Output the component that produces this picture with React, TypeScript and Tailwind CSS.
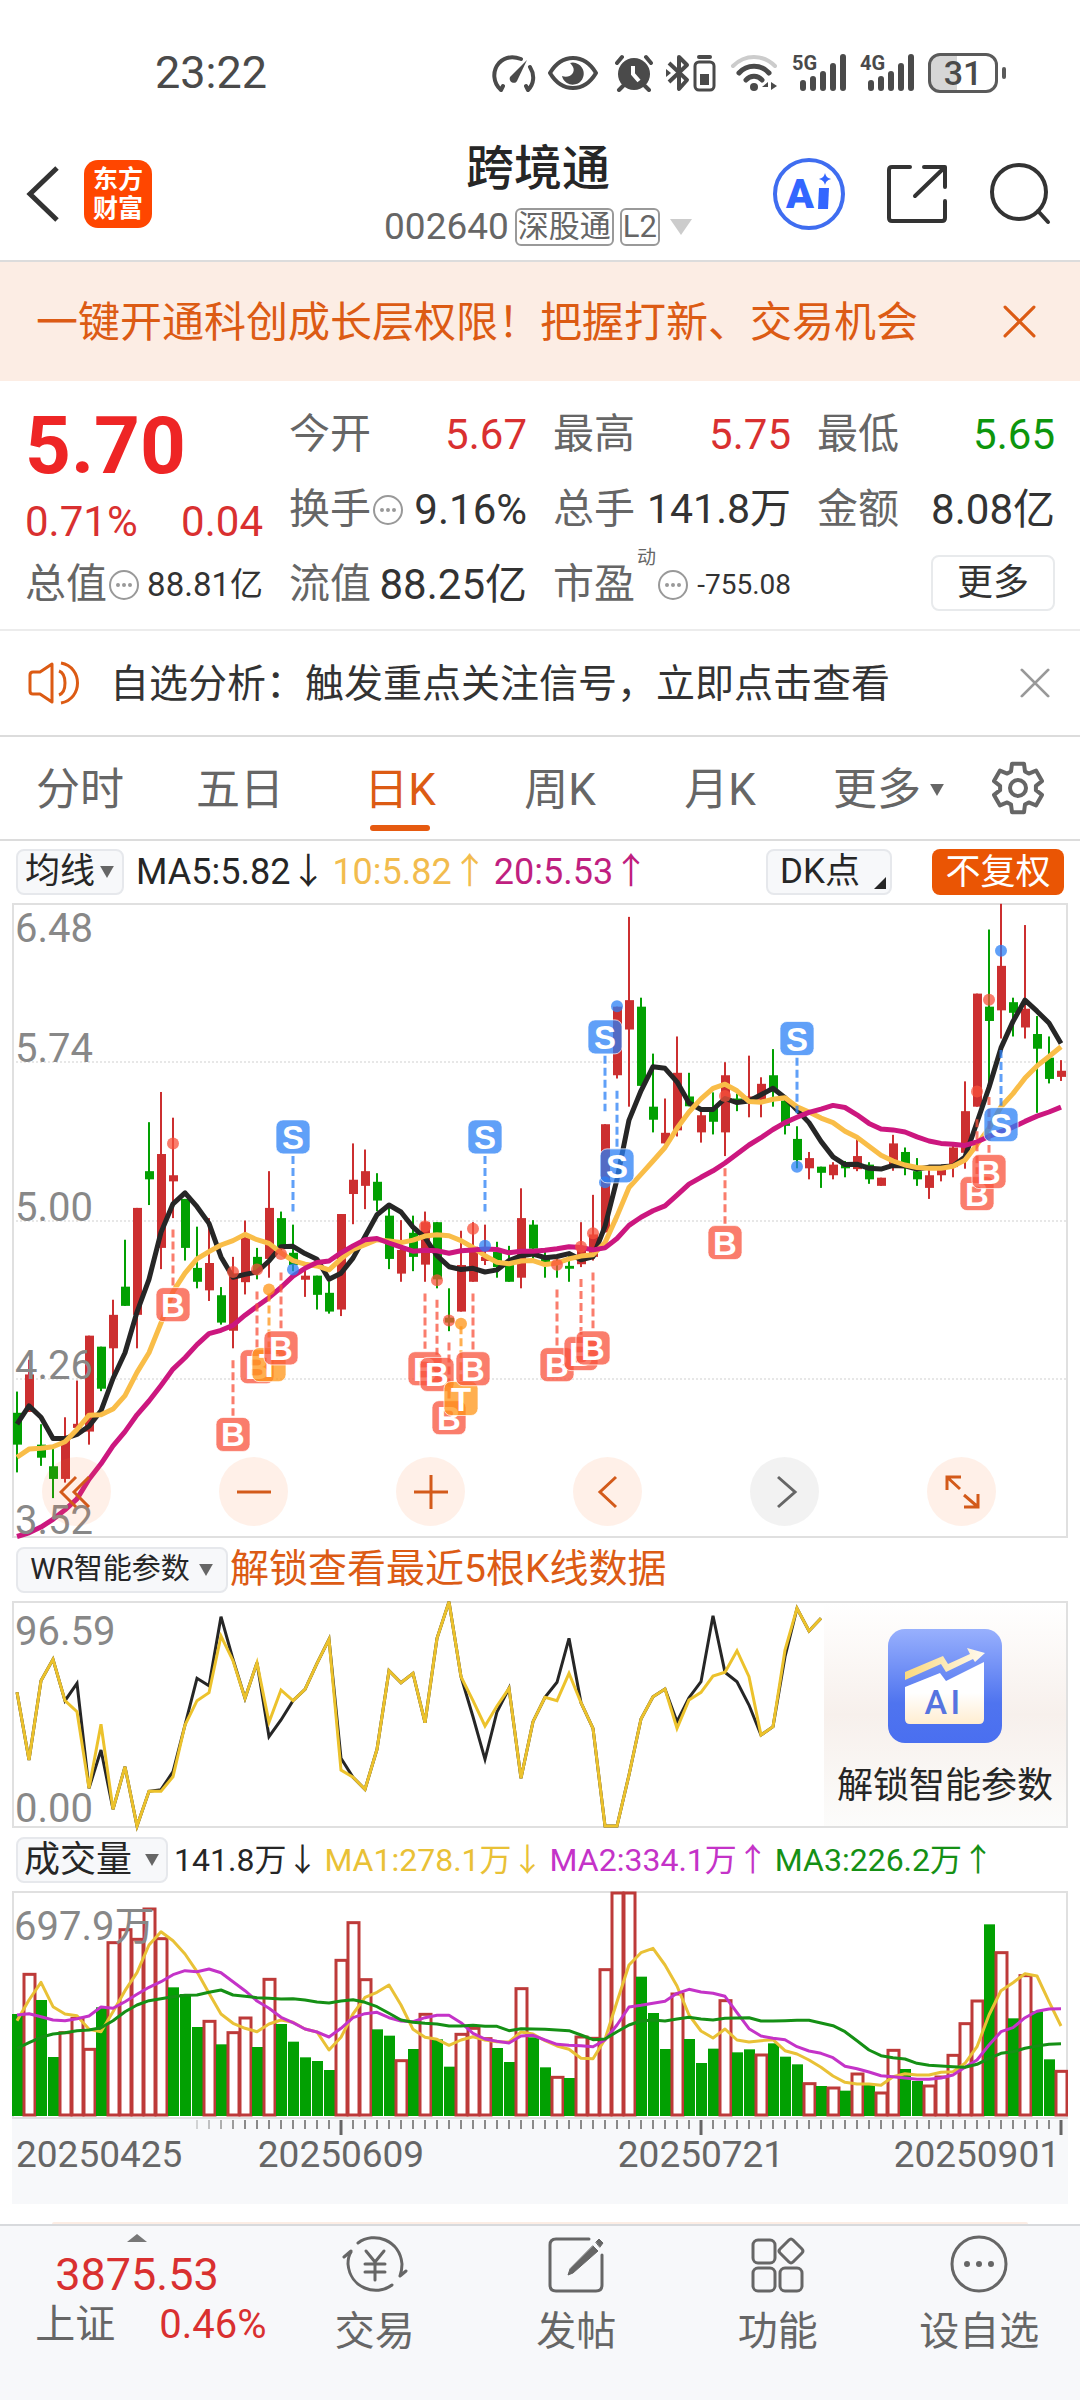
import type { ReactNode } from "react";

type Candle = [tone: "r" | "g", top: number, bottom: number, high: number, low: number];
type Marker = [index: number, kind: "B" | "S" | "T", label: number, dot: number, from: number, to: number];

const RED = "#cc2f30";
const GREEN = "#02a002";

const candles: Candle[] = [
  ["g", 1257, 1335, 1205, 1403], ["r", 1163, 1255, 1127, 1255], ["g", 1335, 1367, 1285, 1387], ["g", 1388, 1419, 1345, 1466],
  ["r", 1320, 1419, 1268, 1428], ["r", 1284, 1294, 1178, 1294], ["r", 1068, 1303, 1068, 1335], ["g", 1095, 1198, 1095, 1204],
  ["r", 1017, 1099, 980, 1170], ["g", 948, 995, 833, 995], ["r", 755, 1017, 755, 1099], ["g", 665, 685, 545, 748],
  ["r", 623, 853, 471, 905], ["r", 675, 690, 534, 780], ["g", 733, 853, 733, 884], ["g", 902, 936, 801, 952],
  ["r", 890, 957, 780, 983], ["g", 969, 1036, 949, 1041], ["r", 915, 1056, 875, 1099], ["r", 828, 937, 786, 967],
  ["g", 875, 910, 853, 930], ["r", 755, 880, 665, 926], ["g", 780, 850, 764, 865], ["g", 865, 895, 796, 910],
  ["r", 921, 931, 905, 973], ["g", 921, 968, 921, 1004], ["g", 963, 1009, 935, 1014], ["r", 770, 1004, 770, 1020],
  ["r", 686, 721, 597, 795], ["r", 665, 701, 612, 758], ["g", 691, 737, 670, 763], ["g", 774, 880, 750, 905],
  ["r", 858, 916, 785, 936], ["g", 816, 875, 774, 910], ["r", 790, 894, 764, 936], ["g", 790, 930, 790, 952],
  ["g", 1024, 1036, 952, 1057], ["r", 895, 1009, 811, 1009], ["r", 850, 936, 790, 936], ["r", 875, 885, 796, 895],
  ["g", 863, 900, 838, 926], ["g", 885, 936, 848, 936], ["r", 780, 926, 707, 952], ["g", 796, 855, 785, 880],
  ["g", 875, 890, 860, 926], ["g", 885, 893, 870, 926], ["g", 897, 904, 870, 936], ["r", 850, 893, 790, 900],
  ["r", 820, 875, 723, 884], ["r", 550, 815, 550, 815], ["r", 262, 430, 262, 438], ["r", 246, 318, 42, 507],
  ["g", 262, 456, 240, 456], ["g", 507, 539, 377, 570], ["r", 571, 597, 487, 597], ["r", 424, 565, 335, 580],
  ["g", 482, 506, 424, 506], ["r", 528, 570, 518, 595], ["g", 510, 544, 472, 575], ["r", 430, 570, 398, 628],
  ["g", 487, 497, 475, 518], ["r", 482, 492, 382, 533], ["r", 451, 490, 435, 533], ["g", 430, 470, 366, 507],
  ["g", 492, 554, 485, 575], ["g", 586, 638, 555, 658], ["r", 633, 658, 618, 685], ["g", 654, 669, 654, 706],
  ["r", 649, 675, 643, 685], ["g", 648, 658, 640, 680], ["r", 628, 660, 586, 665], ["g", 649, 685, 643, 696],
  ["r", 681, 701, 681, 701], ["r", 597, 648, 576, 664], ["g", 618, 648, 607, 675], ["g", 665, 685, 633, 701],
  ["r", 675, 706, 660, 733], ["r", 660, 675, 655, 690], ["r", 607, 655, 600, 680], ["r", 518, 620, 445, 659],
  ["r", 230, 507, 230, 507], ["g", 262, 297, 73, 470], ["r", 162, 271, 10, 340], ["g", 251, 277, 240, 335],
  ["r", 267, 313, 62, 340], ["g", 329, 365, 285, 522], ["g", 387, 439, 335, 450], ["r", 419, 434, 393, 444],
];

const ma5 = [
  1285, 1240, 1268, 1320, 1320, 1310, 1290, 1252, 1173, 1110, 1010, 930, 815, 745, 718, 752, 793, 875, 925, 918, 912, 885,
  850, 849, 867, 881, 930, 915, 878, 825, 772, 748, 765, 802, 828, 872, 899, 906, 903, 912, 907, 884, 872, 868, 877, 874,
  867, 882, 875, 800, 685, 540, 468, 409, 413, 446, 498, 514, 514, 487, 497, 493, 478, 462, 485, 515, 546, 592, 630, 649,
  648, 658, 660, 651, 652, 660, 655, 654, 652, 630, 545, 460, 363, 298, 246, 273, 302, 352,
];
const ma10 = [
  1366, 1346, 1344, 1340, 1328, 1298, 1263, 1262, 1248, 1215, 1158, 1110, 1037, 960, 915, 880, 862, 846, 835, 820, 833, 842,
  865, 884, 893, 897, 907, 880, 857, 845, 833, 836, 840, 834, 824, 821, 823, 835, 852, 872, 888, 892, 885, 884, 894, 890,
  880, 873, 870, 840, 775, 705, 673, 640, 607, 560, 520, 488, 462, 452, 468, 494, 496, 489, 485, 507, 520, 535, 546, 567,
  582, 604, 626, 640, 650, 656, 658, 658, 653, 638, 600, 560, 507, 475, 437, 407, 384, 360,
];
const ma20 = [
  1560, 1551, 1537, 1518, 1495, 1468, 1420, 1382, 1338, 1303, 1262, 1228, 1190, 1150, 1122, 1090, 1063, 1055, 1043, 1018,
  996, 975, 950, 922, 903, 889, 885, 865, 848, 833, 830, 841, 851, 861, 859, 860, 866, 860, 858, 856, 857, 865, 861, 861,
  859, 855, 850, 852, 858, 853, 830, 798, 778, 762, 750, 724, 697, 680, 664, 645, 623, 601, 583, 563, 546, 533, 521, 513,
  504, 509, 527, 548, 562, 564, 569, 581, 591, 597, 599, 602, 593, 580, 568, 557, 543, 530, 520, 508,
];

const markers: Marker[] = [
  [13, "B", 992, 597, 808, 945], [18, "B", 1310, 912, 1128, 1264], [20, "B", 1144, 906, 960, 1100],
  [21, "T", 1139, 955, 965, 1098], [22, "B", 1098, 868, 913, 1050], [23, "S", 581, 906, 628, 764],
  [34, "B", 1149, 800, 965, 1100], [35, "B", 1163, 932, 980, 1115], [36, "B", 1269, 1031, 1085, 1225],
  [37, "T", 1222, 1039, 1045, 1180], [38, "B", 1149, 806, 965, 1102], [39, "S", 581, 848, 628, 764],
  [45, "B", 1139, 894, 955, 1093], [47, "B", 1112, 850, 929, 1066], [48, "B", 1098, 817, 913, 1050],
  [49, "S", 336, 692, 382, 518], [50, "S", 652, 261, 468, 605], [59, "B", 840, 481, 658, 794],
  [65, "S", 340, 654, 387, 523], [80, "B", 720, 470, 538, 672], [81, "B", 666, 245, 483, 620],
  [82, "S", 551, 125, 368, 505],
];

const wrSlow = [
  487, 690, 452, 388, 512, 545, 775, 583, 838, 710, 888, 784, 784, 740, 585, 512, 488, 318, 392, 505, 398, 577, 480, 512,
  478, 400, 328, 720, 742, 778, 658, 422, 458, 430, 578, 325, 215, 440, 512, 588, 528, 475, 745, 575, 502, 512, 430, 518,
  595, 888, 888, 735, 567, 500, 477, 595, 510, 487, 438, 427, 362, 440, 615, 590, 360, 235, 303, 265,
];
const wrFastChanges: Record<number, number> = {
  5: 460, 7: 660, 12: 779, 13: 725, 15: 445, 16: 467, 17: 260, 18: 388, 21: 620, 22: 570, 27: 685, 38: 560, 39: 688,
  40: 545, 45: 457, 46: 325, 55: 575, 56: 503, 57: 455, 58: 257, 60: 455, 61: 525, 64: 380,
};
const wrFast = wrSlow.map((v, i) => wrFastChanges[i] ?? v);

const volumes = [
  552, 430, 510, 681, 605, 562, 655, 532, 335, 296, 325, 234, 323, 472, 492, 591, 571, 643, 605, 561, 651, 445, 582, 635,
  682, 693, 720, 388, 275, 446, 598, 617, 689, 657, 550, 628, 710, 610, 592, 623, 654, 696, 473, 622, 712, 739, 744, 618,
  622, 416, 186, 186, 440, 549, 657, 489, 627, 699, 656, 509, 667, 658, 672, 640, 680, 703, 758, 768, 771, 782, 729, 765,
  786, 658, 717, 753, 765, 738, 673, 578, 510, 283, 365, 565, 434, 544, 688, 721,
];
const volumeTones =
  "grggrrrgrrrrrgggrgrrgrgggggrrrggrgrggrrrggrggrgrrrrrgggrgggrggrgggrgrgrgrrggrrrrrgrgrggr";
const volMa1 = [
  572, 510, 457, 530, 552, 557, 598, 605, 545, 482, 428, 345, 305, 332, 372, 425, 490, 552, 580, 595, 605, 582, 570, 577,
  597, 606, 660, 622, 552, 502, 487, 465, 525, 598, 622, 628, 646, 630, 620, 630, 635, 636, 606, 612, 632, 648, 658, 685,
  686, 628, 515, 405, 368, 355, 405, 468, 555, 603, 624, 597, 630, 636, 632, 629, 662, 672, 690, 712, 738, 757, 762, 762,
  766, 740, 731, 735, 735, 727, 725, 700, 650, 555, 482, 458, 431, 438, 515, 588,
];
const volMa2 = [
  555, 551, 560, 570, 572, 566, 558, 531, 535, 515, 493, 472, 455, 434, 422, 425, 417, 428, 455, 482, 513, 535, 562, 578,
  597, 606, 621, 595, 563, 551, 547, 563, 573, 575, 563, 556, 556, 578, 610, 627, 634, 639, 618, 616, 630, 643, 646, 647,
  650, 630, 585, 531, 526, 520, 514, 490, 478, 486, 490, 499, 548, 596, 618, 625, 629, 650, 663, 670, 683, 709, 716, 726,
  737, 740, 744, 748, 748, 744, 735, 712, 690, 645, 605, 593, 563, 544, 537, 536,
];
const volMa3 = [
  655, 638, 622, 612, 608, 602, 600, 593, 572, 545, 525, 512, 506, 500, 496, 495, 487, 480, 495, 499, 503, 505, 507, 506,
  510, 516, 519, 513, 509, 517, 530, 550, 570, 577, 580, 582, 588, 588, 586, 589, 589, 602, 596, 597, 598, 600, 602, 615,
  629, 627, 605, 585, 573, 570, 573, 567, 562, 567, 570, 565, 564, 563, 573, 573, 572, 571, 571, 579, 587, 605, 632, 660,
  677, 683, 687, 700, 706, 708, 710, 712, 703, 685, 670, 665, 655, 648, 643, 641,
];

const colX = (i: number) => 5 + i * 12;
const priceY = (v: number) => (v - 8) / 2.45;
const wrY = (v: number) => (v - 213) / 3;
const volY = (v: number) => (v - 183) / 3;
const line = (values: number[], y: (v: number) => number) =>
  values.map((v, i) => `${colX(i)},${y(v).toFixed(1)}`).join(" ");

const markerColor = { B: "#f8523b", S: "#2b80f5", T: "#ff9416" };

function Frame({ height }: { height: number }) {
  return <rect x="1" y="1" width="1054" height={height - 2} fill="none" stroke="#e0e0e0" strokeWidth="2" />;
}

function AxisText({ x, y, children }: { x: number; y: number; children: string }) {
  return (
    <text x={x} y={y} fontSize="40" fill="#888888">
      {children}
    </text>
  );
}

function PriceChart() {
  return (
    <svg viewBox="0 0 1056 635" className="block h-auto w-full overflow-visible" role="img" aria-label="日K线图">
      {[159, 318, 476].map((y) => (
        <line key={y} x1="0" x2="1056" y1={y} y2={y} stroke="#cfcfcf" strokeDasharray="2 2" />
      ))}
      <Frame height={635} />
      {candles.map(([tone, top, bottom, high, low], i) => {
        const fill = tone === "r" ? RED : GREEN;
        return (
          <g key={i} fill={fill}>
            <rect x={colX(i) - 1} y={priceY(high)} width="2" height={priceY(low) - priceY(high)} />
            <rect x={colX(i) - 4} y={priceY(top)} width="9" height={priceY(bottom) - priceY(top)} />
          </g>
        );
      })}
      <g fill="none" strokeWidth="5" strokeLinejoin="round">
        <polyline points={line(ma5, priceY)} stroke="#262626" />
        <polyline points={line(ma10, priceY)} stroke="#f9bd48" />
        <polyline points={line(ma20, priceY)} stroke="#cc177f" />
      </g>
      <AxisText x={3} y={39}>6.48</AxisText>
      <AxisText x={3} y={159}>5.74</AxisText>
      <AxisText x={3} y={318}>5.00</AxisText>
      <AxisText x={3} y={476}>4.26</AxisText>
      <AxisText x={3} y={631}>3.52</AxisText>
      {markers.map(([i, kind, label, dot, from, to]) => (
        <g key={i} fill={markerColor[kind]}>
          <line
            x1={colX(i)} x2={colX(i)} y1={priceY(from)} y2={priceY(to)}
            stroke={markerColor[kind]} strokeOpacity="0.75" strokeWidth="3" strokeDasharray="8 4"
          />
          <circle cx={colX(i)} cy={priceY(dot)} r="6" fillOpacity="0.75" />
          <rect
            x={colX(i) - 17} y={priceY(label) - 17} width="34" height="34" rx="7"
            fillOpacity="0.75" stroke="#ffffff" strokeOpacity="0.7"
          />
          <text
            x={colX(i)} y={priceY(label) + 12} textAnchor="middle" fontSize="33" fontWeight="700"
            fill="#ffffff" className="font-['Liberation_Sans']"
          >
            {kind}
          </text>
        </g>
      ))}
    </svg>
  );
}

function WrChart() {
  return (
    <svg viewBox="0 0 1056 227" className="block h-auto w-full overflow-visible" role="img" aria-label="WR指标图">
      <Frame height={227} />
      <AxisText x={3} y={44}>96.59</AxisText>
      <AxisText x={3} y={221}>0.00</AxisText>
      <g fill="none" strokeWidth="3" strokeLinejoin="miter">
        <polyline points={line(wrFast, wrY)} stroke="#262626" />
        <polyline points={line(wrSlow, wrY)} stroke="#ecc22c" />
      </g>
    </svg>
  );
}

function VolumeChart() {
  return (
    <svg viewBox="0 0 1056 228" className="block h-auto w-full" role="img" aria-label="成交量图">
      <Frame height={228} />
      {volumes.map((v, i) =>
        volumeTones[i] === "g" ? (
          <rect key={i} x={colX(i) - 5} y={volY(v)} width="11" height={225 - volY(v)} fill={GREEN} />
        ) : (
          <rect
            key={i} x={colX(i) - 5} y={volY(v) + 1} width="11" height={223 - volY(v)}
            fill="#ffffff" stroke="#bd3a39" strokeWidth="3"
          />
        ),
      )}
      <AxisText x={2} y={49}>697.9万</AxisText>
      <g fill="none" strokeWidth="3" strokeLinejoin="round">
        <polyline points={line(volMa1, volY)} stroke="#e9c136" />
        <polyline points={line(volMa2, volY)} stroke="#c433c8" />
        <polyline points={line(volMa3, volY)} stroke="#159015" />
      </g>
    </svg>
  );
}

function DateAxis() {
  return (
    <svg viewBox="0 0 1056 85" className="block h-auto w-full bg-[#f7f8fa]" role="img" aria-label="日期">
      {Array.from({ length: 73 }, (_, k) => k + 15).map((i) => {
        const major = i === 27 || i === 57 || i === 87;
        return (
          <line
            key={i} x1={colX(i)} x2={colX(i)} y1="1" y2={major ? 16 : 10} stroke={major ? "#666666" : "#8a8a8a"}
            strokeWidth={major ? 3 : 2} strokeOpacity={Math.min(1, (i - 13) / 6)}
          />
        );
      })}
      <g fontSize="37" fill="#666666">
        <text x="4" y="48">20250425</text>
        <text x="329" y="48" textAnchor="middle">20250609</text>
        <text x="689" y="48" textAnchor="middle">20250721</text>
        <text x="1048" y="48" textAnchor="end">20250901</text>
      </g>
    </svg>
  );
}

function StatusIcons() {
  return (
    <div className="flex items-center text-[#4a4a4a]" aria-hidden="true">
      <svg width="44" height="40" viewBox="0 0 44 40" fill="none" stroke="currentColor" strokeWidth="4" strokeLinecap="round" strokeLinejoin="round">
        <path d="M11 33l-2 4C1 30 0 18 7 10 13 4 21 3 29 6M38 14c5 8 4 17-2 23l-2-4" />
        <path d="M35 7 25 28c-2 4-9 1-7-4z" fill="currentColor" stroke="none" />
      </svg>
      <svg width="50" height="36" viewBox="0 0 50 36" className="ml-3" fill="none" stroke="currentColor" strokeWidth="4">
        <path d="M2 18C8 8 16 3 25 3s17 5 23 15c-6 10-14 15-23 15S8 28 2 18z" strokeLinejoin="round" />
        <path d="M22 8a11 11 0 1 1-8 13c7 3 14-3 11-9-1-2-2-3-3-4z" fill="currentColor" stroke="none" />
      </svg>
      <svg width="40" height="38" viewBox="0 0 40 38" className="ml-4">
        <circle cx="20" cy="20" r="16" fill="currentColor" />
        <path d="M3 9 8 3M37 9l-5-6M9 32l-4 4M31 32l4 4" stroke="currentColor" strokeWidth="4" strokeLinecap="round" />
        <path d="M19 12v8l6 7" stroke="#ffffff" strokeWidth="4" fill="none" />
      </svg>
      <svg width="52" height="38" viewBox="0 0 52 38" className="ml-3" fill="none" stroke="currentColor" strokeWidth="4">
        <path d="M3 9 21 26l-8 9V3l8 8L3 28" strokeLinejoin="round" />
        <path d="M0 15l5 4-5 4z" fill="currentColor" stroke="none" />
        <rect x="29" y="8" width="19" height="28" rx="4" strokeWidth="3" />
        <path d="M33 3h11" strokeLinecap="round" />
        <path d="M34 20h9v11h-9z" fill="currentColor" stroke="none" />
      </svg>
      <svg width="50" height="38" viewBox="0 0 50 38" className="ml-3" fill="none" strokeWidth="5" strokeLinecap="round">
        <path d="M3 12C15 0 33 0 45 12" stroke="#cccccc" strokeWidth="4" />
        <path d="M9 19c8-9 22-9 30 0M16 26c4-5 12-5 16 0" stroke="currentColor" />
        <circle cx="24" cy="33" r="4" fill="currentColor" />
        <path d="m38 28-6 5h6zM41 28v8l6-4z" fill="currentColor" />
      </svg>
      {["5G", "4G"].map((label) => (
        <div key={label} className="relative ml-3 h-10 w-14">
          <span className="absolute top-0 left-0 text-[20px] leading-5 font-bold">{label}</span>
          <svg viewBox="0 0 56 40" className="h-10 w-14" stroke="currentColor" strokeWidth="6" strokeLinecap="round">
            <path d="M11 35v-5M21 35v-9M31 35V21M41 35V13M51 35V4" />
          </svg>
        </div>
      ))}
      <div className="ml-3 flex h-10 w-[70px] items-center justify-center rounded-xl border-3 border-[#5a5a5a] bg-linear-to-r from-[#d6d6d6] from-40% to-white to-40% text-[34px] leading-none font-medium">
        31
      </div>
      <div className="ml-1 h-3 w-1 rounded-full bg-[#5a5a5a]" />
    </div>
  );
}

function CloseIcon({ size, className }: { size: number; className?: string }) {
  return (
    <svg width={size} height={size} viewBox="0 0 32 32" className={className} stroke="currentColor" strokeWidth="3" strokeLinecap="round">
      <path d="M2 2l28 28M30 2 2 30" />
    </svg>
  );
}

function InfoDots() {
  return (
    <svg width="30" height="30" viewBox="0 0 30 30" fill="none" stroke="#999999" strokeWidth="2" className="shrink-0">
      <circle cx="15" cy="15" r="14" />
      <path d="M9 15h0M15 15h0M21 15h0" strokeWidth="4" strokeLinecap="round" />
    </svg>
  );
}

function Caret({ className }: { className?: string }) {
  return (
    <svg viewBox="0 0 16 14" className={className} fill="#666666" aria-hidden="true">
      <path d="M0 0h16L8 14z" />
    </svg>
  );
}

function Stat({ label, value, tone = "text-[#333333]", extra, size = "text-[42px]" }: {
  label: string;
  value: string;
  tone?: string;
  extra?: ReactNode;
  size?: string;
}) {
  return (
    <div className="flex h-[75px] items-center justify-between whitespace-nowrap">
      <dt className="flex items-center gap-0.5 text-[41px] text-[#666666]">
        {label}
        {extra}
      </dt>
      <dd className={`${size} ${tone}`}>{value}</dd>
    </div>
  );
}

const gearPath = Array.from({ length: 6 }, (_, k) => k * 60 - 90)
  .flatMap((a) => [[a - 23, 18], [a - 14, 25], [a + 14, 25], [a + 23, 18]])
  .map(([a, r], i) => {
    const t = (a * Math.PI) / 180;
    return `${i ? "L" : "M"}${(28 + r * Math.cos(t)).toFixed(1)} ${(28 + r * Math.sin(t)).toFixed(1)}`;
  })
  .join("") + "Z";

function ChartButton({ label, muted, children }: { label: string; muted?: boolean; children: ReactNode }) {
  return (
    <button
      aria-label={label}
      className={`flex size-[69px] items-center justify-center rounded-full ${muted ? "bg-[#8888881c] text-[#666666]" : "bg-[#ff7a301c] text-[#d35a1a]"}`}
    >
      <svg width="36" height="36" viewBox="0 0 36 36" fill="none" stroke="currentColor" strokeWidth="3">
        {children}
      </svg>
    </button>
  );
}

function NavButton({ label, children }: { label: string; children: ReactNode }) {
  return (
    <button className="flex flex-1 flex-col items-center pt-2 text-[#666666]">
      <svg width="66" height="60" viewBox="0 0 66 60" fill="none" stroke="currentColor" strokeWidth="3" strokeLinecap="round" strokeLinejoin="round">
        {children}
      </svg>
      <span className="mt-2 text-[40px] leading-[60px]">{label}</span>
    </button>
  );
}

const chip = "flex h-[46px] items-center rounded-lg border-2 border-[#e6e8ec] bg-[#f7f8fa] text-[#262626]";

export default function App() {
  return (
    <div className="flex min-h-screen w-full flex-col overflow-hidden bg-white font-['Roboto','Noto_Sans_CJK_SC',sans-serif] text-[#262626]">
      <div className="flex h-[120px] items-end justify-between pr-[74px] pb-[27px] pl-[155px]">
        <time className="text-[45px] leading-10 text-[#4a4a4a]">23:22</time>
        <StatusIcons />
      </div>

      <header className="grid h-[142px] grid-cols-[1fr_auto_1fr] items-center border-b-2 border-[#dcdcdc] pr-7 pl-6">
        <div className="flex items-center gap-6 pt-2">
          <button aria-label="返回">
            <svg width="36" height="58" viewBox="0 0 36 58" fill="none" stroke="#333333" strokeWidth="5">
              <path d="M33 3 6 29l27 26" />
            </svg>
          </button>
          <div className="flex size-[68px] flex-col items-center justify-center rounded-[14px] bg-[#ff4600] text-[25px] leading-[29px] font-bold text-white">
            <span>东方</span>
            <span>财富</span>
          </div>
        </div>
        <button className="flex flex-col items-center pt-3">
          <span className="text-[48px] leading-[62px] font-medium">跨境通</span>
          <span className="flex items-center gap-1.5 text-[37px] leading-[54px] text-[#666666]">
            002640
            <span className="flex h-[38px] items-center rounded-md border-2 border-[#999999] px-px text-[31px]">深股通</span>
            <span className="flex h-[38px] items-center rounded-md border-2 border-[#999999] px-px text-[31px]">L2</span>
            <svg width="22" height="16" viewBox="0 0 22 16" fill="#cccccc" className="ml-1">
              <path d="M0 0h22L11 16z" />
            </svg>
          </span>
        </button>
        <div className="flex items-center justify-end gap-10 pt-2">
          <button aria-label="Ai">
            <svg width="74" height="74" viewBox="0 0 74 74">
              <circle cx="37" cy="37" r="34" fill="#ffffff" stroke="#3f6df0" strokeWidth="4" />
              <text x="14" y="51" fontSize="41" fontWeight="900" fill="#3366ff">A</text>
              <path d="M47 31h10l-1 21h-10z" fill="#3366ff" />
              <path d="M53 16c1 4 3 5 6 6-3 1-5 2-6 6-1-4-3-5-6-6 3-1 5-2 6-6z" fill="#3366ff" />
            </svg>
          </button>
          <button aria-label="分享">
            <svg width="62" height="62" viewBox="0 0 62 62" fill="none" stroke="#333333" strokeWidth="4" strokeLinecap="round" strokeLinejoin="round">
              <path d="M24 4H6q-3 0-3 3v48q0 3 3 3h50q3 0 3-3V38" />
              <path d="M38 4h21v20M58 5 29 33" />
            </svg>
          </button>
          <button aria-label="搜索">
            <svg width="64" height="64" viewBox="0 0 64 64" fill="none" stroke="#333333" strokeWidth="4" strokeLinecap="round">
              <circle cx="31" cy="30" r="27" />
              <path d="M50 49l10 11" />
            </svg>
          </button>
        </div>
      </header>

      <section className="flex h-[119px] items-center justify-between bg-[#fcede4] pr-[44px] pl-9 text-[#dc5b14]">
        <a href="#open" className="pt-0.5 text-[42px]">一键开通科创成长层权限！把握打新、交易机会</a>
        <button aria-label="关闭"><CloseIcon size={33} /></button>
      </section>

      <section className="grid h-[250px] grid-cols-4 gap-x-[26px] border-b-2 border-[#ececec] px-[25px] pt-4">
        <div>
          <div className="flex h-[98px] items-center text-[80px] leading-none font-bold text-[#ee2525]">5.70</div>
          <div className="flex h-[52px] items-center justify-between text-[42px] text-[#d93030]">
            <span>0.71%</span>
            <span>0.04</span>
          </div>
          <Stat label="总值" extra={<InfoDots />} value="88.81亿" size="text-[33px]" />
        </div>
        <dl>
          <Stat label="今开" value="5.67" tone="text-[#d93030]" />
          <Stat label="换手" extra={<InfoDots />} value="9.16%" />
          <Stat label="流值" value="88.25亿" />
        </dl>
        <dl>
          <Stat label="最高" value="5.75" tone="text-[#d93030]" />
          <Stat label="总手" value="141.8万" size="text-[41px]" />
          <Stat
            label="市盈"
            extra={<><sup className="mt-1 self-start text-[19px] leading-5">动</sup><InfoDots /></>}
            value="-755.08"
            size="text-[28px]"
          />
        </dl>
        <div>
          <Stat label="最低" value="5.65" tone="text-[#0d960d]" />
          <Stat label="金额" value="8.08亿" />
          <div className="flex h-[72px] items-center justify-end">
            <button className="h-14 w-[124px] rounded-lg border-2 border-[#e8eaec] text-[36px] leading-none text-[#333333]">更多</button>
          </div>
        </div>
      </section>

      <section className="flex h-[106px] items-center border-b-2 border-[#dcdcdc] pr-[30px] pl-7">
        <svg width="54" height="44" viewBox="0 0 54 44" fill="none" stroke="#dc5b14" strokeWidth="3" strokeLinejoin="round">
          <path d="M24 3v38L12 33H5q-3 0-3-3V14q0-3 3-3h7zM31 10c8 3 8 21 0 24M33 2c22 4 22 36 0 40" />
        </svg>
        <a href="#analysis" className="ml-7 flex-1 pt-0.5 text-[39px] text-[#333333]">自选分析：触发重点关注信号，立即点击查看</a>
        <button aria-label="关闭" className="text-[#999999]"><CloseIcon size={30} /></button>
      </section>

      <nav className="flex h-[104px] items-center border-b-2 border-[#dcdcdc] text-[44px] text-[#666666]">
        {["分时", "五日", "日K", "周K", "月K"].map((tab) => (
          <button
            key={tab}
            aria-current={tab === "日K" ? "page" : undefined}
            className={`relative h-full w-40 pt-1 ${tab === "日K" ? "text-[#dc5b14]" : ""}`}
          >
            {tab}
            {tab === "日K" && <span className="absolute bottom-2 left-1/2 h-1.5 w-15 -translate-x-1/2 rounded-full bg-[#e65a10]" />}
          </button>
        ))}
        <button className="flex h-full flex-1 items-center justify-center gap-2 pt-1 pr-3">
          更多
          <Caret className="h-3 w-4" />
        </button>
        <button aria-label="设置" className="mr-[34px]">
          <svg width="56" height="56" viewBox="0 0 56 56" fill="none" stroke="#666666" strokeWidth="4" strokeLinejoin="round">
            <path d={gearPath} />
            <circle cx="28" cy="28" r="8" />
          </svg>
        </button>
      </nav>

      <main className="px-3">
        <div className="flex h-[62px] items-center pr-1 pl-1 text-[36px] whitespace-nowrap">
          <button className={`${chip} w-[108px] justify-center gap-1 text-[35px]`}>
            均线
            <Caret className="h-3 w-4" />
          </button>
          <span className="ml-3">MA5:5.82↓</span>
          <span className="ml-1.5 text-[#f2bc4e]">10:5.82↑</span>
          <span className="ml-1.5 text-[#c01f80]">20:5.53↑</span>
          <button className={`${chip} relative mr-10 ml-auto w-[126px] px-3 text-[35px]`}>
            DK点
            <svg viewBox="0 0 12 12" className="absolute right-1 bottom-1 size-3" fill="#262626">
              <path d="M12 0v12H0z" />
            </svg>
          </button>
          <button className="h-[46px] w-[132px] rounded-lg bg-[#ea5504] text-[35px] leading-none text-white">不复权</button>
        </div>

        <div className="relative">
          <PriceChart />
          <div className="absolute right-[72px] bottom-3 left-[30px] flex justify-between">
            <ChartButton label="最早"><path d="M17 3 2 18l15 15M30 3 15 18l15 15" /></ChartButton>
            <ChartButton label="缩小"><path d="M1 18h34" /></ChartButton>
            <ChartButton label="放大"><path d="M1 18h34M18 1v34" /></ChartButton>
            <ChartButton label="向左"><path d="M26 3 10 18l16 15" /></ChartButton>
            <ChartButton label="向右" muted><path d="M11 3l17 15-17 15" /></ChartButton>
            <ChartButton label="全屏"><path d="M3 16V3h14M3 3l13 12M34 20v13H20M34 33 20 21" /></ChartButton>
          </div>
        </div>

        <div className="flex h-[63px] items-center pl-1 whitespace-nowrap">
          <button className={`${chip} w-[212px] justify-center gap-2 text-[29px]`}>
            WR智能参数
            <Caret className="h-3 w-4" />
          </button>
          <a href="#unlock" className="ml-0.5 text-[39px] text-[#dc5b14]">解锁查看最近5根K线数据</a>
        </div>

        <div className="relative">
          <WrChart />
          <button className="absolute inset-y-0.5 right-0.5 flex w-[242px] flex-col items-center bg-linear-to-b from-white via-[#f7f0ec] to-[#fcfcfb] pt-[26px]">
            <svg width="114" height="114" viewBox="0 0 114 114">
              <defs>
                <linearGradient id="tile" x1="0" x2="0" y1="0" y2="1">
                  <stop offset="0" stopColor="#98b0fd" />
                  <stop offset="0.65" stopColor="#4f74ef" />
                  <stop offset="1" stopColor="#4a6ff0" />
                </linearGradient>
                <linearGradient id="card" x1="0" x2="0" y1="0" y2="1">
                  <stop offset="0.5" stopColor="#ffffff" />
                  <stop offset="1" stopColor="#ffedd0" />
                </linearGradient>
                <linearGradient id="arrow" x1="0" x2="1" y1="0" y2="0">
                  <stop offset="0" stopColor="#fbd97c" />
                  <stop offset="1" stopColor="#fffaf0" />
                </linearGradient>
              </defs>
              <rect width="114" height="114" rx="17" fill="url(#tile)" />
              <path d="M17 58 52 44l6 8 38-19v57q0 5-5 5H22q-5 0-5-5z" fill="url(#card)" />
              <path d="M17 43 55 27l5 8 22-10-3-6 18 5-10 9-2-3-27 13-5-8-36 16z" fill="url(#arrow)" />
              <text x="56" y="85" textAnchor="middle" fontSize="34" fontWeight="500" fill="#5674e0" className="tracking-widest">AI</text>
            </svg>
            <span className="mt-4 text-[36px] leading-[54px]">解锁智能参数</span>
          </button>
        </div>

        <div className="flex h-[63px] items-center gap-1.5 pl-1 text-[32px] whitespace-nowrap">
          <button className={`${chip} w-[152px] justify-center gap-3 text-[36px]`}>
            成交量
            <Caret className="h-3 w-4" />
          </button>
          <span>141.8万↓</span>
          <span className="text-[#e9c136]">MA1:278.1万↓</span>
          <span className="text-[#c433c8]">MA2:334.1万↑</span>
          <span className="text-[#159015]">MA3:226.2万↑</span>
        </div>

        <VolumeChart />
        <DateAxis />
      </main>

      <div className="mx-[52px] mt-auto h-0.5 rounded-t-lg bg-[#fcede4]" />
      <footer className="flex h-[176px] border-t-2 border-[#d8dadd] bg-[#f7f8fa]">
        <button className="flex w-[274px] flex-col items-center pt-2 text-[40px] text-[#666666]">
          <svg width="20" height="8" viewBox="0 0 20 8" fill="#777777">
            <path d="M10 0 20 8H0z" />
          </svg>
          <span className="mt-2 text-[45px] leading-[50px] text-[#d93030]">3875.53</span>
          <span className="flex gap-11 pl-7 leading-[50px]">
            上证<span className="text-[#d93030]">0.46%</span>
          </span>
        </button>
        <NavButton label="交易">
          <path d="M16 9C32-3 58 6 60 30c0 6-1 9-2 12M58 42l6-5M50 51C34 63 8 54 6 30c0-6 1-9 3-12M9 17l-7 6" />
          <path d="m24 17 9 11 9-11M33 28v18M23 30h20M23 38h20" />
        </NavButton>
        <NavButton label="发帖">
          <path d="M46 5H13q-6 0-6 6v40q0 6 6 6h40q6 0 6-6V21" />
          <path d="m50 12 5 5-25 22-5 2 2-6zM53 8l3-3 4 4-3 4z" fill="currentColor" strokeWidth="1" />
        </NavButton>
        <NavButton label="功能">
          <rect x="8" y="6" width="22" height="23" rx="5" />
          <rect x="8" y="34" width="22" height="23" rx="5" />
          <rect x="35" y="34" width="22" height="23" rx="5" />
          <path d="M44 6q2-2 4 0l9 9q2 2 0 4l-9 9q-2 2-4 0l-9-9q-2-2 0-4z" />
        </NavButton>
        <NavButton label="设自选">
          <circle cx="33" cy="30" r="27" />
          <path d="M21 30h0M33 30h0M45 30h0" strokeWidth="6" />
        </NavButton>
      </footer>
    </div>
  );
}
